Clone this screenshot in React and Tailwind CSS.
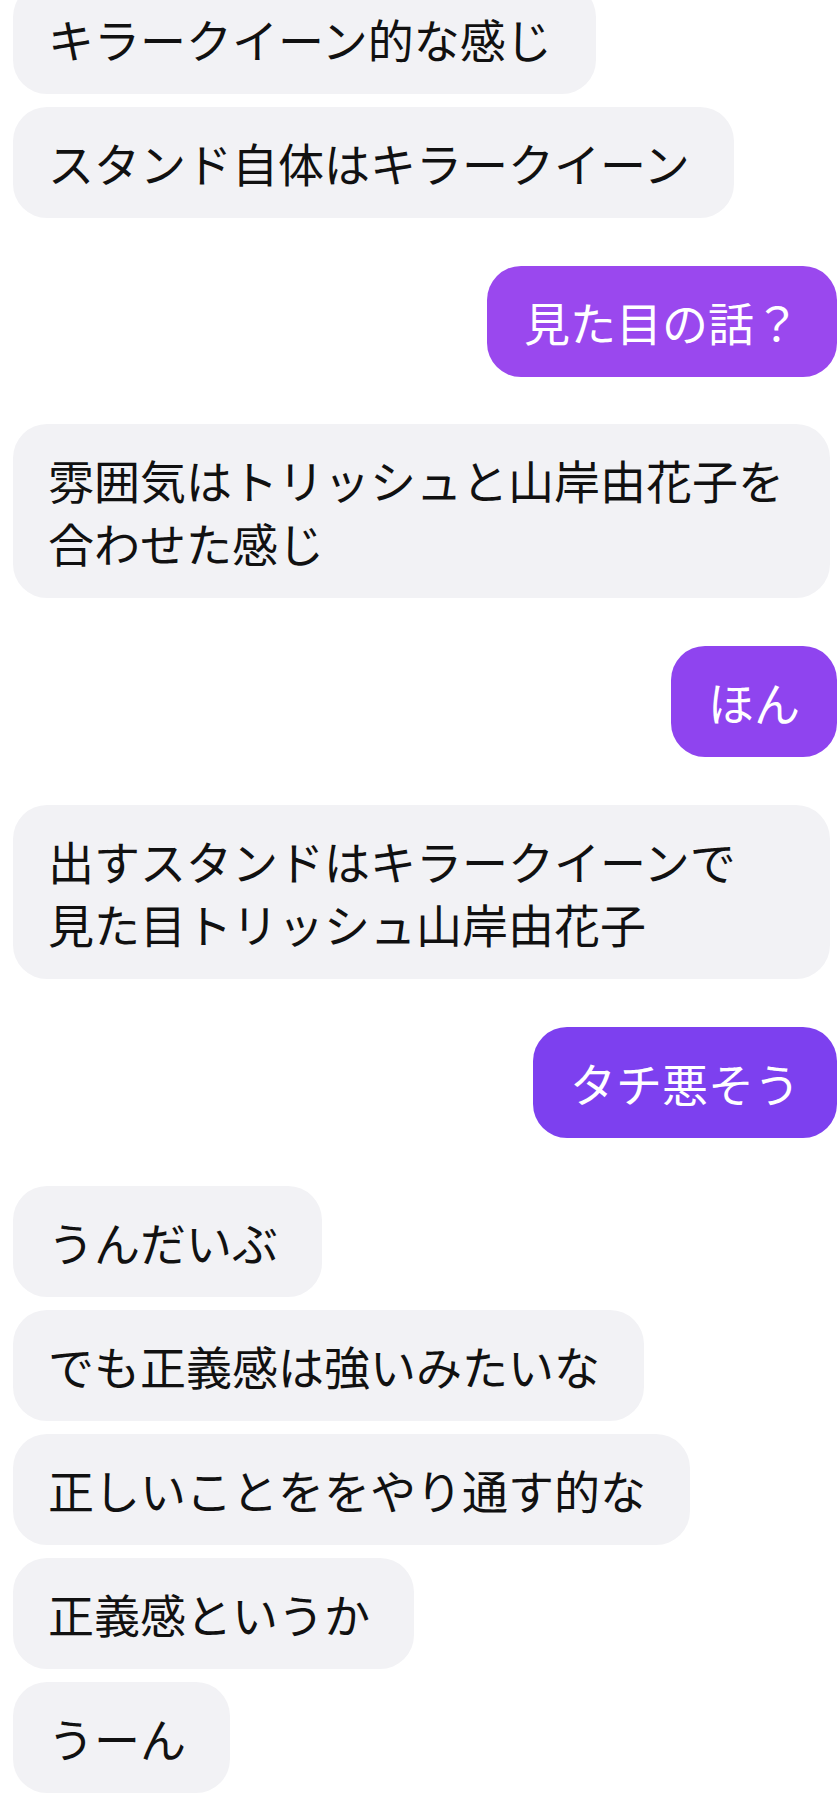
import React from "react";

const font = { fontFamily: '"Noto Sans CJK JP", "Noto Sans", sans-serif' };

function Left({ children, wide }) {
  return (
    <div
      className={`self-start rounded-[34px] bg-[#f2f2f5] pl-[35px] pr-[44px] py-[24px] text-[46px] leading-[63px] text-[#111111] ${wide ? "w-[817px]" : ""}`}
    >
      {children}
    </div>
  );
}

function Right({ children, color }) {
  return (
    <div
      className={`self-end rounded-[34px] px-[37px] py-[24px] text-[46px] leading-[63px] text-white ${color}`}
    >
      {children}
    </div>
  );
}

export default function App() {
  return (
    <div className="w-[840px] h-[1795px] overflow-hidden bg-white" style={font}>
      <div className="mt-[-17px] flex flex-col pl-[13px] pr-[3px]">
        <Left>キラークイーン的な感じ</Left>
        <div className="h-[13px]" />
        <Left>スタンド自体はキラークイーン</Left>
        <div className="h-[48px]" />
        <Right color="bg-[#9a48ee]">見た目の話？</Right>
        <div className="h-[47px]" />
        <Left wide>
          雰囲気はトリッシュと山岸由花子を
          <br />
          合わせた感じ
        </Left>
        <div className="h-[48px]" />
        <Right color="bg-[#8f44ef]">ほん</Right>
        <div className="h-[48px]" />
        <Left wide>
          出すスタンドはキラークイーンで
          <br />
          見た目トリッシュ山岸由花子
        </Left>
        <div className="h-[48px]" />
        <Right color="bg-[#7d40ef]">タチ悪そう</Right>
        <div className="h-[48px]" />
        <div className="flex flex-col items-start gap-[13px]">
          <Left>うんだいぶ</Left>
          <Left>でも正義感は強いみたいな</Left>
          <Left>正しいことををやり通す的な</Left>
          <Left>正義感というか</Left>
          <Left>うーん</Left>
        </div>
      </div>
    </div>
  );
}
